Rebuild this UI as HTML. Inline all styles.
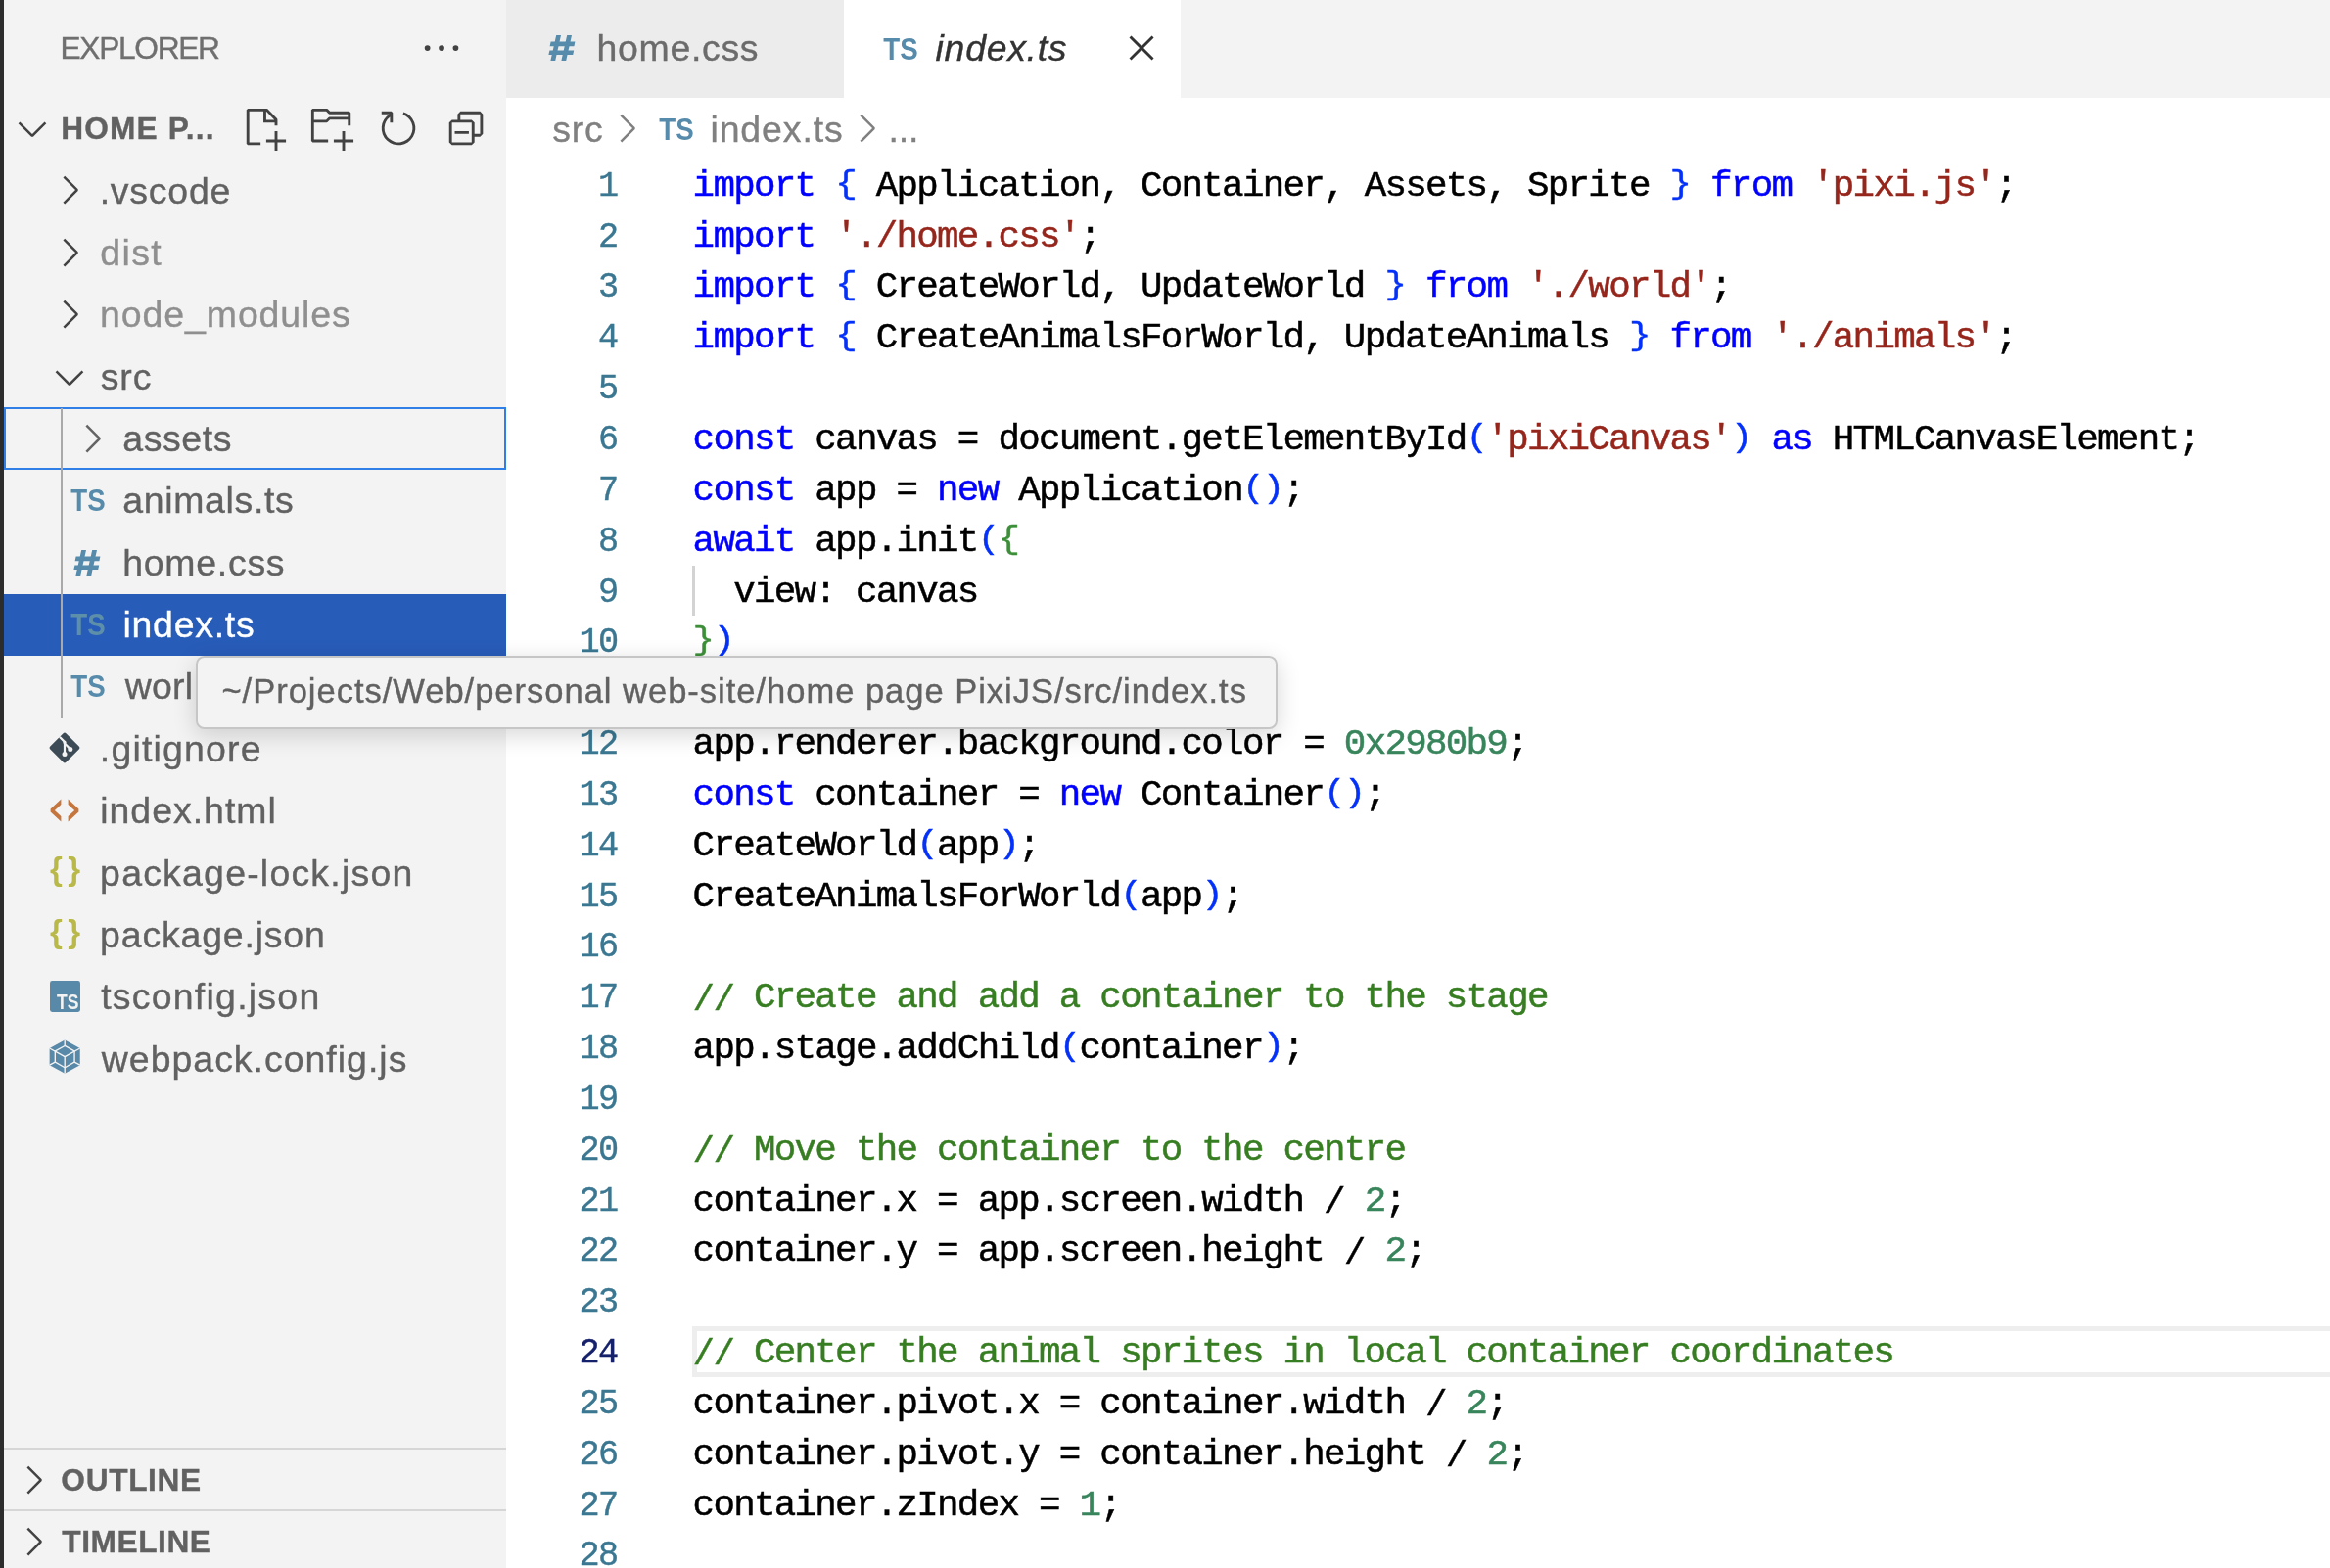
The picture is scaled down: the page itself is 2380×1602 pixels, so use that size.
<!DOCTYPE html>
<html><head><meta charset="utf-8"><title>index.ts</title>
<style>
html,body{margin:0;padding:0;overflow:hidden}
html{width:2380px;height:1602px}
body{width:2380px;height:1602px;overflow:hidden;position:relative;background:#fff;font-family:"Liberation Sans",sans-serif;}
.abs{position:absolute}
.t{-webkit-text-stroke-width:0.38px;position:absolute;white-space:pre;font-family:"Liberation Sans",sans-serif;font-size:37.44px;line-height:64px;height:64px;color:#616161}
.b{font-weight:bold}
.h{font-size:31.68px}
.code{-webkit-text-stroke-width:0.5px;position:absolute;left:707.6px;white-space:pre;font-family:"Liberation Mono",monospace;font-size:37.5px;letter-spacing:-1.715px;line-height:51.84px;height:51.84px;color:#000}
.ln{-webkit-text-stroke-width:0.4px;transform:scaleX(0.94);transform-origin:100% 50%;position:absolute;left:538px;width:92.5px;text-align:right;white-space:pre;font-family:"Liberation Mono",monospace;font-size:37.5px;letter-spacing:-1.715px;line-height:51.84px;height:51.84px;color:#3b7791}
.k{color:#0000ff}.p{color:#0431fa}.g{color:#3c8f38}.sl{position:relative;top:2.3px}.p,.g{display:inline-block;transform:translateY(-2px) scaleY(0.865)}.s{color:#96261c}.c{color:#377e22}.n{color:#38855c}
svg{position:absolute;overflow:visible}
</style></head><body><div id="w" style="position:absolute;left:0;top:0;width:2380px;height:1602px;overflow:hidden;will-change:transform">

<div class="abs" style="left:0;top:0;width:517px;height:1602px;background:#f3f3f3"></div>
<div class="abs" style="left:0;top:0;width:4px;height:1602px;background:#2c2c2c"></div>
<div class="abs" style="left:517px;top:0;width:1863px;height:100px;background:#f3f3f3"></div>
<div class="abs" style="left:517px;top:0;width:345px;height:100px;background:#ececec"></div>
<div class="abs" style="left:862px;top:0;width:343.9px;height:100px;background:#fff"></div>
<div class="t" style="left:61.46px;top:16.90px;font-size:31.68px;letter-spacing:-1.282px;color:#6f6f6f;">EXPLORER</div>
<svg style="left:427.60px;top:26.16px" width="46.08" height="46.08" viewBox="0 0 16 16"><path fill="#424242" fill-rule="nonzero" clip-rule="nonzero" d="M4 8a1 1 0 1 1-2 0 1 1 0 0 1 2 0zm5 0a1 1 0 1 1-2 0 1 1 0 0 1 2 0zm5 0a1 1 0 1 1-2 0 1 1 0 0 1 2 0z"/></svg>
<svg style="left:10.00px;top:108.46px" width="46.08" height="46.08" viewBox="0 0 16 16"><path fill="#424242" fill-rule="evenodd" clip-rule="evenodd" d="M7.976 10.072l4.357-4.357.62.618L8.284 11h-.618L3 6.333l.619-.618 4.357 4.357z"/></svg>
<div class="t" style="left:62.28px;top:99.40px;font-size:31.68px;letter-spacing:1.123px;font-weight:bold;-webkit-text-stroke-width:0.35px;">HOME P...</div>
<svg style="left:246.20px;top:107.96px" width="46.08" height="46.08" viewBox="0 0 16 16"><path fill="#424242" fill-rule="evenodd" clip-rule="evenodd" d="M9.5 1.1l3.4 3.5.1.4v2h-1V6H8V2H3v11h4v1H2.5l-.5-.5v-12l.5-.5h6.7l.3.1zM9 2v3h2.9L9 2zm4 14h-1v-3H9v-1h3V9h1v3h3v1h-3v3z"/></svg>
<svg style="left:315.00px;top:107.96px" width="46.08" height="46.08" viewBox="0 0 16 16"><path fill="#424242" fill-rule="evenodd" clip-rule="evenodd" d="M14.5 2H7.71l-.85-.85L6.51 1h-5l-.5.5v11l.5.5H7v-1H1.99V6h4.49l.35-.15.86-.86H14v1.5l-.001.51h1.011V2.5L14.5 2zm-.51 2h-6.5l-.35.15-.86.86H2v-3h4.29l.85.85.36.15H14l-.01.99zM13 16h-1v-3H9v-1h3V9h1v3h3v1h-3v3z"/></svg>
<svg style="left:384.20px;top:107.96px" width="46.08" height="46.08" viewBox="0 0 16 16"><path fill="#424242" fill-rule="evenodd" clip-rule="evenodd" d="M4.681 3H2V2h3.5l.5.5V6H5V4a5 5 0 1 0 4.53-.761l.302-.954A6 6 0 1 1 4.681 3z"/></svg>
<svg style="left:453.40px;top:107.96px" width="46.08" height="46.08" viewBox="0 0 16 16"><path fill="#424242" fill-rule="evenodd" clip-rule="evenodd" d="M9 9H4v1h5V9z M5 3l1-1h7l1 1v7l-1 1h-2v2l-1 1H3l-1-1V6l1-1h2V3zm1 2h4l1 1v4h2V3H6v2zm4 1H3v7h7V6z"/></svg>
<div class="abs" style="left:4px;top:606.82px;width:513px;height:63.36px;background:#285cb9"></div>
<div class="abs" style="left:4px;top:415.89px;width:513px;height:64.26px;box-sizing:border-box;border:2.3px solid #2f7fe6"></div>
<div class="abs" style="left:62px;top:416.74px;width:2.4px;height:316.80px;background:#a9a9a9"></div>
<svg style="left:48.00px;top:171.44px" width="46.08" height="46.08" viewBox="0 0 16 16"><path fill="#424242" fill-rule="evenodd" clip-rule="evenodd" d="M10.072 8.024L5.715 3.667l.618-.62L11 7.716v.618L6.333 13l-.618-.619 4.357-4.357z"/></svg>
<div class="t" style="left:101.70px;top:162.58px;font-size:37.44px;letter-spacing:0.778px;">.vscode</div>
<svg style="left:48.00px;top:234.80px" width="46.08" height="46.08" viewBox="0 0 16 16"><path fill="#424242" fill-rule="evenodd" clip-rule="evenodd" d="M10.072 8.024L5.715 3.667l.618-.62L11 7.716v.618L6.333 13l-.618-.619 4.357-4.357z"/></svg>
<div class="t" style="left:102.25px;top:225.94px;font-size:37.44px;letter-spacing:1.404px;color:#8f8f8f;">dist</div>
<svg style="left:48.00px;top:298.16px" width="46.08" height="46.08" viewBox="0 0 16 16"><path fill="#424242" fill-rule="evenodd" clip-rule="evenodd" d="M10.072 8.024L5.715 3.667l.618-.62L11 7.716v.618L6.333 13l-.618-.619 4.357-4.357z"/></svg>
<div class="t" style="left:102.10px;top:289.30px;font-size:37.44px;letter-spacing:0.926px;color:#8f8f8f;">node_modules</div>
<svg style="left:48.00px;top:361.52px" width="46.08" height="46.08" viewBox="0 0 16 16"><path fill="#424242" fill-rule="evenodd" clip-rule="evenodd" d="M7.976 10.072l4.357-4.357.62.618L8.284 11h-.618L3 6.333l.619-.618 4.357 4.357z"/></svg>
<div class="t" style="left:102.76px;top:352.66px;font-size:37.44px;letter-spacing:0.911px;">src</div>
<svg style="left:71.04px;top:424.88px" width="46.08" height="46.08" viewBox="0 0 16 16"><path fill="#646464" fill-rule="evenodd" clip-rule="evenodd" d="M10.072 8.024L5.715 3.667l.618-.62L11 7.716v.618L6.333 13l-.618-.619 4.357-4.357z"/></svg>
<div class="t" style="left:125.27px;top:416.02px;font-size:37.44px;letter-spacing:0.596px;">assets</div>
<div class="abs" style="left:70.14px;top:492.18px;width:40.13px;height:40px;line-height:40px;font-size:31.4px;font-weight:bold;color:#568bab;white-space:pre;transform:scaleX(0.8822);transform-origin:50% 50%;text-align:center">TS</div>
<div class="t" style="left:125.27px;top:479.38px;font-size:37.44px;letter-spacing:0.667px;">animals.ts</div>
<svg style="left:75.30px;top:561.64px" width="28" height="26" viewBox="0 0 28 26"><g fill="#568bab"><polygon points="8.2,0 13,0 7.2,26 2.4,26"/><polygon points="19.2,0 24,0 18.2,26 13.4,26"/><polygon points="2.6,6.6 27.4,6.6 26.4,11.2 1.6,11.2"/><polygon points="1.4,15.4 26.2,15.4 25.2,20 0.4,20"/></g></svg>
<div class="t" style="left:125.23px;top:542.74px;font-size:37.44px;letter-spacing:0.743px;">home.css</div>
<div class="abs" style="left:70.14px;top:618.90px;width:40.13px;height:40px;line-height:40px;font-size:31.4px;font-weight:bold;color:#5d8fa9;white-space:pre;transform:scaleX(0.8822);transform-origin:50% 50%;text-align:center">TS</div>
<div class="t" style="left:125.46px;top:606.10px;font-size:37.44px;letter-spacing:0.755px;color:#ffffff;">index.ts</div>
<div class="abs" style="left:70.14px;top:682.26px;width:40.13px;height:40px;line-height:40px;font-size:31.4px;font-weight:bold;color:#568bab;white-space:pre;transform:scaleX(0.8822);transform-origin:50% 50%;text-align:center">TS</div>
<div class="t" style="left:127.71px;top:669.46px;font-size:37.44px;letter-spacing:0.250px;">worl</div>
<svg style="left:50.30px;top:748.02px" width="32" height="32" viewBox="0 0 32 32"><rect x="4.6" y="4.6" width="22.8" height="22.8" rx="2" fill="#3c4b55" transform="rotate(45 16 16)"/><g stroke="#f3f3f3" stroke-width="2.2" fill="none" stroke-linecap="round"><path d="M11.5 5.5L16 10v12.5"/><path d="M16 11.5l5.6 5.6"/></g><circle cx="16" cy="22.6" r="2.5" fill="#f3f3f3"/><circle cx="21.8" cy="17.4" r="2.5" fill="#f3f3f3"/><circle cx="16" cy="10.4" r="1.6" fill="#f3f3f3"/></svg>
<div class="t" style="left:101.83px;top:732.82px;font-size:37.44px;letter-spacing:1.188px;">.gitignore</div>
<svg style="left:50.40px;top:811.68px" width="32" height="32" viewBox="0 0 32 32"><g fill="#c5763f"><polygon points="12.4,4.6 12.4,10 5.9,16 12.4,22 12.4,27.4 1.6,17.4 1.6,14.6"/><polygon points="19.6,4.6 19.6,10 26.1,16 19.6,22 19.6,27.4 30.4,17.4 30.4,14.6"/></g></svg>
<div class="t" style="left:102.14px;top:796.18px;font-size:37.44px;letter-spacing:1.022px;">index.html</div>
<div class="abs" style="left:36.50px;top:866.44px;width:60px;height:44px;line-height:44px;text-align:center;font-size:33px;font-weight:bold;letter-spacing:5.5px;text-indent:5.5px;color:#b9b84a;white-space:pre">{}</div>
<div class="t" style="left:102.12px;top:859.54px;font-size:37.44px;letter-spacing:1.225px;">package-lock.json</div>
<div class="abs" style="left:36.50px;top:929.80px;width:60px;height:44px;line-height:44px;text-align:center;font-size:33px;font-weight:bold;letter-spacing:5.5px;text-indent:5.5px;color:#b9b84a;white-space:pre">{}</div>
<div class="t" style="left:102.12px;top:922.90px;font-size:37.44px;letter-spacing:0.835px;">package.json</div>
<div class="abs" style="left:50.90px;top:1001.86px;width:31.2px;height:32px;border-radius:2.4px;background:#5989a8"></div>
<div class="abs" style="left:57.50px;top:1011.66px;width:30px;height:24px;line-height:24px;font-size:21.4px;font-weight:bold;color:#f3f3f3;white-space:pre;transform:scaleX(0.82);transform-origin:0 50%">TS</div>
<div class="t" style="left:103.13px;top:986.26px;font-size:37.44px;letter-spacing:1.256px;">tsconfig.json</div>
<svg style="left:49.80px;top:1062.42px" width="32.4" height="35.2" viewBox="0 0 33 36"><polygon points="16.5,0.4 32.4,9.2 32.4,26.8 16.5,35.6 0.6,26.8 0.6,9.2" fill="#5989a8"/><g stroke="#f3f3f3" stroke-width="1.4" fill="none"><polygon points="16.5,6.6 26.6,12.3 26.6,23.7 16.5,29.4 6.4,23.7 6.4,12.3"/><path d="M16.5 18V35.6M16.5 18L0.6 9.2M16.5 18L32.4 9.2M6.4 12.3L16.5 18l10.1-5.7M16.5 0.4v6.2M0.6 26.8l5.8-3.1M32.4 26.8l-5.8-3.1"/></g></svg>
<div class="t" style="left:103.80px;top:1049.62px;font-size:37.44px;letter-spacing:1.013px;">webpack.config.js</div>
<div class="abs" style="left:4px;top:1479px;width:513px;height:2.2px;background:#d6d6d6"></div>
<div class="abs" style="left:4px;top:1542px;width:513px;height:2.2px;background:#d6d6d6"></div>
<svg style="left:10.50px;top:1488.76px" width="46.08" height="46.08" viewBox="0 0 16 16"><path fill="#424242" fill-rule="evenodd" clip-rule="evenodd" d="M10.072 8.024L5.715 3.667l.618-.62L11 7.716v.618L6.333 13l-.618-.619 4.357-4.357z"/></svg>
<svg style="left:10.50px;top:1551.96px" width="46.08" height="46.08" viewBox="0 0 16 16"><path fill="#424242" fill-rule="evenodd" clip-rule="evenodd" d="M10.072 8.024L5.715 3.667l.618-.62L11 7.716v.618L6.333 13l-.618-.619 4.357-4.357z"/></svg>
<div class="t" style="left:62.37px;top:1479.70px;font-size:31.68px;letter-spacing:0.639px;font-weight:bold;-webkit-text-stroke-width:0.35px;">OUTLINE</div>
<div class="t" style="left:63.37px;top:1542.90px;font-size:31.68px;letter-spacing:0.546px;font-weight:bold;-webkit-text-stroke-width:0.35px;">TIMELINE</div>
<svg style="left:559.80px;top:36.00px" width="28" height="26" viewBox="0 0 28 26"><g fill="#568bab"><polygon points="8.2,0 13,0 7.2,26 2.4,26"/><polygon points="19.2,0 24,0 18.2,26 13.4,26"/><polygon points="2.6,6.6 27.4,6.6 26.4,11.2 1.6,11.2"/><polygon points="1.4,15.4 26.2,15.4 25.2,20 0.4,20"/></g></svg>
<div class="t" style="left:609.60px;top:17.10px;font-size:37.44px;letter-spacing:0.684px;color:#6b6b6b;">home.css</div>
<div class="abs" style="left:899.94px;top:30.70px;width:40.13px;height:40px;line-height:40px;font-size:31.4px;font-weight:bold;color:#568bab;white-space:pre;transform:scaleX(0.8822);transform-origin:50% 50%;text-align:center">TS</div>
<div class="t" style="left:955.60px;top:17.10px;font-size:37.44px;letter-spacing:0.713px;color:#333333;font-style:italic;">index.ts</div>
<svg style="left:1143.10px;top:26.36px" width="46.08" height="46.08" viewBox="0 0 16 16"><path fill="#333" fill-rule="evenodd" clip-rule="evenodd" d="M8 8.707l3.646 3.647.708-.707L8.707 8l3.647-3.646-.707-.708L8 7.293 4.354 3.646l-.707.708L7.293 8l-3.647 3.646.708.708L8 8.707z"/></svg>
<div class="t" style="left:564.14px;top:99.70px;font-size:37.44px;letter-spacing:0.907px;color:#808080;">src</div>
<svg style="left:616.50px;top:108.26px" width="46.08" height="46.08" viewBox="0 0 16 16"><path fill="#808080" fill-rule="evenodd" clip-rule="evenodd" d="M10.072 8.024L5.715 3.667l.618-.62L11 7.716v.618L6.333 13l-.618-.619 4.357-4.357z"/></svg>
<div class="abs" style="left:671.24px;top:112.50px;width:40.13px;height:40px;line-height:40px;font-size:31.4px;font-weight:bold;color:#568bab;white-space:pre;transform:scaleX(0.8822);transform-origin:50% 50%;text-align:center">TS</div>
<div class="t" style="left:725.44px;top:99.70px;font-size:37.44px;letter-spacing:0.901px;color:#808080;">index.ts</div>
<svg style="left:861.80px;top:108.26px" width="46.08" height="46.08" viewBox="0 0 16 16"><path fill="#808080" fill-rule="evenodd" clip-rule="evenodd" d="M10.072 8.024L5.715 3.667l.618-.62L11 7.716v.618L6.333 13l-.618-.619 4.357-4.357z"/></svg>
<div class="t" style="left:907.53px;top:99.70px;font-size:37.44px;letter-spacing:-0.198px;color:#808080;">...</div>
<div class="abs" style="left:707px;top:1355.22px;width:1700px;height:51.84px;box-sizing:border-box;border:5px solid #eeeeee"></div>
<div class="abs" style="left:707.4px;top:577.62px;width:2.9px;height:51.84px;background:#d3d3d3"></div>
<div class="ln" style="top:164.80px;">1</div>
<div class="code" style="top:164.80px"><span class="k">import</span> <span class="p">{</span> Application, Container, Assets, Sprite <span class="p">}</span> <span class="k">from</span> <span class="s">'pixi.js'</span>;</div>
<div class="ln" style="top:216.64px;">2</div>
<div class="code" style="top:216.64px"><span class="k">import</span> <span class="s">'./home.css'</span>;</div>
<div class="ln" style="top:268.48px;">3</div>
<div class="code" style="top:268.48px"><span class="k">import</span> <span class="p">{</span> CreateWorld, UpdateWorld <span class="p">}</span> <span class="k">from</span> <span class="s">'./world'</span>;</div>
<div class="ln" style="top:320.32px;">4</div>
<div class="code" style="top:320.32px"><span class="k">import</span> <span class="p">{</span> CreateAnimalsForWorld, UpdateAnimals <span class="p">}</span> <span class="k">from</span> <span class="s">'./animals'</span>;</div>
<div class="ln" style="top:372.16px;">5</div>
<div class="ln" style="top:424.00px;">6</div>
<div class="code" style="top:424.00px"><span class="k">const</span> canvas = document.getElementById<span class="p">(</span><span class="s">'pixiCanvas'</span><span class="p">)</span> <span class="k">as</span> HTMLCanvasElement;</div>
<div class="ln" style="top:475.84px;">7</div>
<div class="code" style="top:475.84px"><span class="k">const</span> app = <span class="k">new</span> Application<span class="p">()</span>;</div>
<div class="ln" style="top:527.68px;">8</div>
<div class="code" style="top:527.68px"><span class="k">await</span> app.init<span class="p">(</span><span class="g">{</span></div>
<div class="ln" style="top:579.52px;">9</div>
<div class="code" style="top:579.52px">  view: canvas</div>
<div class="ln" style="top:631.36px;">10</div>
<div class="code" style="top:631.36px"><span class="g">}</span><span class="p">)</span></div>
<div class="ln" style="top:683.20px;">11</div>
<div class="ln" style="top:735.04px;">12</div>
<div class="code" style="top:735.04px">app.renderer.background.color = <span class="n">0x2980b9</span>;</div>
<div class="ln" style="top:786.88px;">13</div>
<div class="code" style="top:786.88px"><span class="k">const</span> container = <span class="k">new</span> Container<span class="p">()</span>;</div>
<div class="ln" style="top:838.72px;">14</div>
<div class="code" style="top:838.72px">CreateWorld<span class="p">(</span>app<span class="p">)</span>;</div>
<div class="ln" style="top:890.56px;">15</div>
<div class="code" style="top:890.56px">CreateAnimalsForWorld<span class="p">(</span>app<span class="p">)</span>;</div>
<div class="ln" style="top:942.40px;">16</div>
<div class="ln" style="top:994.24px;">17</div>
<div class="code" style="top:994.24px"><span class="c"><span class="sl">//</span> Create and add a container to the stage</span></div>
<div class="ln" style="top:1046.08px;">18</div>
<div class="code" style="top:1046.08px">app.stage.addChild<span class="p">(</span>container<span class="p">)</span>;</div>
<div class="ln" style="top:1097.92px;">19</div>
<div class="ln" style="top:1149.76px;">20</div>
<div class="code" style="top:1149.76px"><span class="c"><span class="sl">//</span> Move the container to the centre</span></div>
<div class="ln" style="top:1201.60px;">21</div>
<div class="code" style="top:1201.60px">container.x = app.screen.width <span class="sl">/</span> <span class="n">2</span>;</div>
<div class="ln" style="top:1253.44px;">22</div>
<div class="code" style="top:1253.44px">container.y = app.screen.height <span class="sl">/</span> <span class="n">2</span>;</div>
<div class="ln" style="top:1305.28px;">23</div>
<div class="ln" style="top:1357.12px;color:#16216b;">24</div>
<div class="code" style="top:1357.12px"><span class="c"><span class="sl">//</span> Center the animal sprites in local container coordinates</span></div>
<div class="ln" style="top:1408.96px;">25</div>
<div class="code" style="top:1408.96px">container.pivot.x = container.width <span class="sl">/</span> <span class="n">2</span>;</div>
<div class="ln" style="top:1460.80px;">26</div>
<div class="code" style="top:1460.80px">container.pivot.y = container.height <span class="sl">/</span> <span class="n">2</span>;</div>
<div class="ln" style="top:1512.64px;">27</div>
<div class="code" style="top:1512.64px">container.zIndex = <span class="n">1</span>;</div>
<div class="ln" style="top:1564.48px;">28</div>
<div class="abs" style="left:200.2px;top:670.2px;width:1104.8px;height:74.6px;box-sizing:border-box;background:#f3f3f3;border:2.3px solid #c6c6c6;border-radius:8.6px;box-shadow:0 5.8px 23px rgba(0,0,0,0.16)"></div>
<div class="t" style="left:226.45px;top:674.30px;font-size:34.56px;letter-spacing:0.971px;">~/Projects/Web/personal web-site/home page PixiJS/src/index.ts</div>
</div></body></html>
